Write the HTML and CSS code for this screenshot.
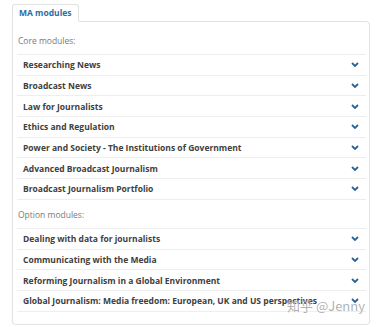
FILE: index.html
```html
<!DOCTYPE html>
<html>
<head>
  <meta charset="utf-8">
  <meta name="viewport" content="width=device-width, initial-scale=1">
  <title>MA modules</title>
  <link rel="stylesheet" href="styles.css">
</head>
<body>
  <div class='tabs'>
    <div class='tab'>MA modules</div>
  </div>
  <div class='panel'>
    <p class='group-label'>Core modules:</p>
    <ul class='modules'>
      <li class='module'><span>Researching News</span><svg class='chev' viewBox='0 0 8 5'><path d='M1 1 L4 4 L7 1'/></svg></li>
      <li class='module'><span>Broadcast News</span><svg class='chev' viewBox='0 0 8 5'><path d='M1 1 L4 4 L7 1'/></svg></li>
      <li class='module'><span>Law for Journalists</span><svg class='chev' viewBox='0 0 8 5'><path d='M1 1 L4 4 L7 1'/></svg></li>
      <li class='module'><span>Ethics and Regulation</span><svg class='chev' viewBox='0 0 8 5'><path d='M1 1 L4 4 L7 1'/></svg></li>
      <li class='module'><span>Power and Society - The Institutions of Government</span><svg class='chev' viewBox='0 0 8 5'><path d='M1 1 L4 4 L7 1'/></svg></li>
      <li class='module'><span>Advanced Broadcast Journalism</span><svg class='chev' viewBox='0 0 8 5'><path d='M1 1 L4 4 L7 1'/></svg></li>
      <li class='module'><span>Broadcast Journalism Portfolio</span><svg class='chev' viewBox='0 0 8 5'><path d='M1 1 L4 4 L7 1'/></svg></li>
    </ul>
    <p class='group-label second'>Option modules:</p>
    <ul class='modules'>
      <li class='module'><span>Dealing with data for journalists</span><svg class='chev' viewBox='0 0 8 5'><path d='M1 1 L4 4 L7 1'/></svg></li>
      <li class='module'><span>Communicating with the Media</span><svg class='chev' viewBox='0 0 8 5'><path d='M1 1 L4 4 L7 1'/></svg></li>
      <li class='module'><span>Reforming Journalism in a Global Environment</span><svg class='chev' viewBox='0 0 8 5'><path d='M1 1 L4 4 L7 1'/></svg></li>
      <li class='module'><span>Global Journalism: Media freedom: European, UK and US perspectives</span><svg class='chev' viewBox='0 0 8 5'><path d='M1 1 L4 4 L7 1'/></svg></li>
    </ul>
  </div>
  <div class='watermark'>知乎 @Jenny</div>
</body>
</html>
```

FILE: styles.css
```css
body {
  background-color: #FFFFFF;
  color: #333333;
  font-family: 'Open Sans', sans-serif;
  margin: 0;
  padding: 4px 10px 0 12px;
  position: relative;
}
.tabs {
  display: flex;
}
.tab {
  border: 1px solid #E2E2E2;
  border-bottom-color: #FFFFFF;
  border-radius: 3px 3px 0 0;
  margin-bottom: -1px;
  padding: 0 6px;
  height: 16px;
  line-height: 16px;
  font-size: 8.5px;
  font-weight: 700;
  color: #2A6EA6;
  background-color: #FFFFFF;
  position: relative;
}
.panel {
  border: 1px solid #E2E2E2;
  border-radius: 0 4px 4px 4px;
  padding: 0 3px 12px 4px;
  box-shadow: 0 1px 2px rgba(0, 0, 0, 0.05);
}
.group-label {
  margin: 0;
  padding: 13px 0 7px 1px;
  font-size: 8.5px;
  line-height: 12px;
  color: #7A7A7A;
}
.group-label.second {
  padding-top: 9px;
}
.modules {
  list-style: none;
  margin: 0;
  padding: 0;
  border-top: 1px solid #EEEEEE;
}
.module {
  display: flex;
  align-items: center;
  justify-content: space-between;
  height: 19.7px;
  padding: 0 7px 0 6px;
  border-bottom: 1px solid #EEEEEE;
  font-size: 8.5px;
  font-weight: 700;
  color: #404040;
  white-space: nowrap;
}
.chev {
  width: 8px;
  height: 5px;
  flex-shrink: 0;
}
.chev path {
  fill: none;
  stroke: #2A6496;
  stroke-width: 1.8;
}
.watermark {
  position: absolute;
  left: 287px;
  top: 296px;
  font-family: 'Noto Sans CJK SC', 'Noto Sans', sans-serif;
  font-size: 13px;
  color: rgba(150, 150, 150, 0.75);
  text-shadow: 0 0 1px #FFFFFF;
  white-space: nowrap;
}
```
